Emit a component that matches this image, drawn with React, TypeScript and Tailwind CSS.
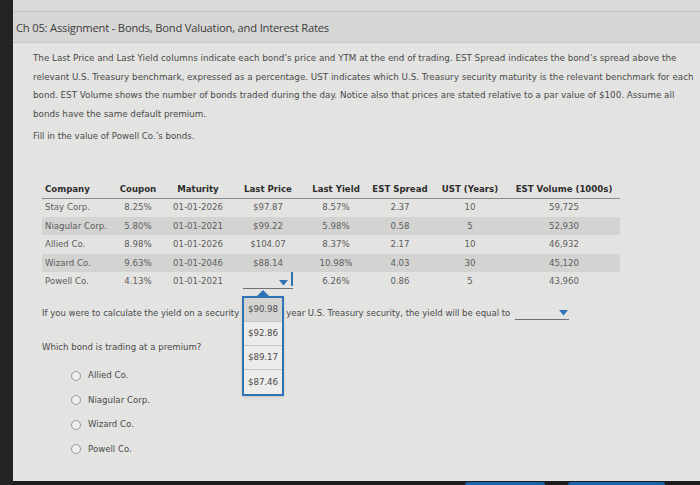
const rows = [
  { company: 'Stay Corp.', coupon: '8.25%', maturity: '01-01-2026', price: '$97.87', yld: '8.57%', spread: '2.37', ust: '10', volume: '59,725' },
  { company: 'Niagular Corp.', coupon: '5.80%', maturity: '01-01-2021', price: '$99.22', yld: '5.98%', spread: '0.58', ust: '5', volume: '52,930' },
  { company: 'Allied Co.', coupon: '8.98%', maturity: '01-01-2026', price: '$104.07', yld: '8.37%', spread: '2.17', ust: '10', volume: '46,932' },
  { company: 'Wizard Co.', coupon: '9.63%', maturity: '01-01-2046', price: '$88.14', yld: '10.98%', spread: '4.03', ust: '30', volume: '45,120' },
  { company: 'Powell Co.', coupon: '4.13%', maturity: '01-01-2021', price: null, yld: '6.26%', spread: '0.86', ust: '5', volume: '43,960' },
]

const options = ['$90.98', '$92.86', '$89.17', '$87.46']
const choices = ['Allied Co.', 'Niagular Corp.', 'Wizard Co.', 'Powell Co.']

function Arrow() {
  return (
    <svg width="9" height="6" viewBox="0 0 9 6" className="shrink-0">
      <path d="M0 0 L9 0 L4.5 5.5 Z" fill="#2f73b5" />
    </svg>
  )
}

export default function App() {
  return (
    <div className="flex w-[700px] h-[485px] overflow-hidden bg-[#e3e3e1] font-['DejaVu_Sans',sans-serif]">
      {/* dark bezel */}
      <div className="w-[13px] shrink-0 bg-[#232325]" />

      <div className="relative flex-1 flex flex-col">
        <div className="h-[12px] bg-[#d9d9d8] border-b border-[#c4c4c4]" />
        <div className="h-[31px] flex items-center pl-[3px] pt-[3px] bg-[#d6d6d5] border-b border-[#c8c8c8]">
          <h1 className="font-['Open_Sans',sans-serif] text-[11.2px] text-[#3c3c3c] tracking-[-0.2px]">
            Ch 05: Assignment - Bonds, Bond Valuation, and Interest Rates
          </h1>
        </div>

        <div className="flex-1 pl-[20px] pr-[2px] pt-[6px] text-[#4a4a4a]">
          <p className="text-[8.75px] leading-[18.6px]">
            The Last Price and Last Yield columns indicate each bond’s price and YTM at the end of trading. EST Spread indicates the bond’s spread above the
            <br />
            relevant U.S. Treasury benchmark, expressed as a percentage. UST indicates which U.S. Treasury security maturity is the relevant benchmark for each
            <br />
            bond. EST Volume shows the number of bonds traded during the day. Notice also that prices are stated relative to a par value of $100. Assume all
            <br />
            bonds have the same default premium.
          </p>
          <p className="mt-[7px] text-[8.6px]">Fill in the value of Powell Co.’s bonds.</p>

          <table className="mt-[37px] ml-[9px] w-[578px] table-fixed border-collapse text-[8.6px] text-[#5d5d5d]">
            <colgroup>
              <col className="w-[70px]" />
              <col className="w-[52px]" />
              <col className="w-[68px]" />
              <col className="w-[72px]" />
              <col className="w-[64px]" />
              <col className="w-[64px]" />
              <col className="w-[76px]" />
              <col className="w-[112px]" />
            </colgroup>
            <thead>
              <tr className="h-[18px] border-b border-[#8a8a8a] text-[#2e2e2e] font-bold">
                <th className="text-left pl-[3px] font-bold">Company</th>
                <th className="font-bold">Coupon</th>
                <th className="font-bold">Maturity</th>
                <th className="font-bold">Last Price</th>
                <th className="font-bold">Last Yield</th>
                <th className="font-bold">EST Spread</th>
                <th className="font-bold">UST (Years)</th>
                <th className="font-bold">EST Volume (1000s)</th>
              </tr>
            </thead>
            <tbody>
              {rows.map((r, i) => (
                <tr key={r.company} className={i % 2 === 1 ? 'h-[18.5px] bg-[#d3d3d2]' : 'h-[18.5px]'}>
                  <td className="pl-[3px]">{r.company}</td>
                  <td className="text-center">{r.coupon}</td>
                  <td className="text-center">{r.maturity}</td>
                  <td className="text-center">
                    {r.price ?? (
                      <div className="relative ml-[11px] w-[50px] h-[14px] border-b border-[#6f6f6f] flex items-end justify-end pr-[5px] pb-[2px]">
                        <Arrow />
                        <span className="absolute right-0 top-[-3px] h-[14px] w-[2px] bg-[#2f73b5]" />
                      </div>
                    )}
                  </td>
                  <td className="text-center">{r.yld}</td>
                  <td className="text-center">{r.spread}</td>
                  <td className="text-center">{r.ust}</td>
                  <td className="text-center">{r.volume}</td>
                </tr>
              ))}
            </tbody>
          </table>

          <p className="mt-[16px] ml-[9px] flex items-center text-[8.5px] h-[14px]">
            <span>If you were to calculate the yield on a security</span>
            <span className="inline-block w-[47px]" />
            <span>year U.S. Treasury security, the yield will be equal to</span>
            <span className="ml-[5px] w-[54px] h-[12px] border-b border-[#6f6f6f] flex items-center justify-end pr-[1px]">
              <Arrow />
            </span>
          </p>

          <p className="mt-[20px] ml-[9px] text-[8.6px]">Which bond is trading at a premium?</p>

          <div className="mt-[15px] ml-[38px] flex flex-col gap-[10.5px] text-[8.6px]">
            {choices.map((c) => (
              <label key={c} className="flex items-center gap-[7px] h-[14px]">
                <span className="w-[10px] h-[10px] rounded-full border border-[#9a9a9a] bg-[#efefee]" />
                <span>{c}</span>
              </label>
            ))}
          </div>
        </div>

        {/* open dropdown list for Powell Co. last price */}
        <div className="absolute left-[229px] top-[290px] w-[42px]">
          <div className="mx-auto w-0 h-0 border-l-[6px] border-r-[6px] border-b-[6px] border-l-transparent border-r-transparent border-b-[#2f73b5]" />
          <ul className="border-2 border-[#2f73b5] bg-[#ececeb] text-[8.6px] text-[#4a4a4a] shadow-sm">
            {options.map((o, i) => (
              <li
                key={o}
                className={
                  i === 0
                    ? 'h-[24px] flex items-center justify-center bg-[#d4d4d3] border-b border-[#c4c4c4]'
                    : i === options.length - 1
                      ? 'h-[24px] flex items-center justify-center'
                      : 'h-[24px] flex items-center justify-center border-b border-[#c4c4c4]'
                }
              >
                {o}
              </li>
            ))}
          </ul>
        </div>

        {/* bottom bezel with buttons */}
        <div className="h-[4px] bg-[#1d1d1f] flex items-end">
          <div className="ml-[452px] w-[80px] h-[3px] rounded-t-[3px] bg-[#1f63a8]" />
          <div className="ml-[23px] w-[97px] h-[3px] rounded-t-[3px] bg-[#1f63a8]" />
        </div>
      </div>
    </div>
  )
}
